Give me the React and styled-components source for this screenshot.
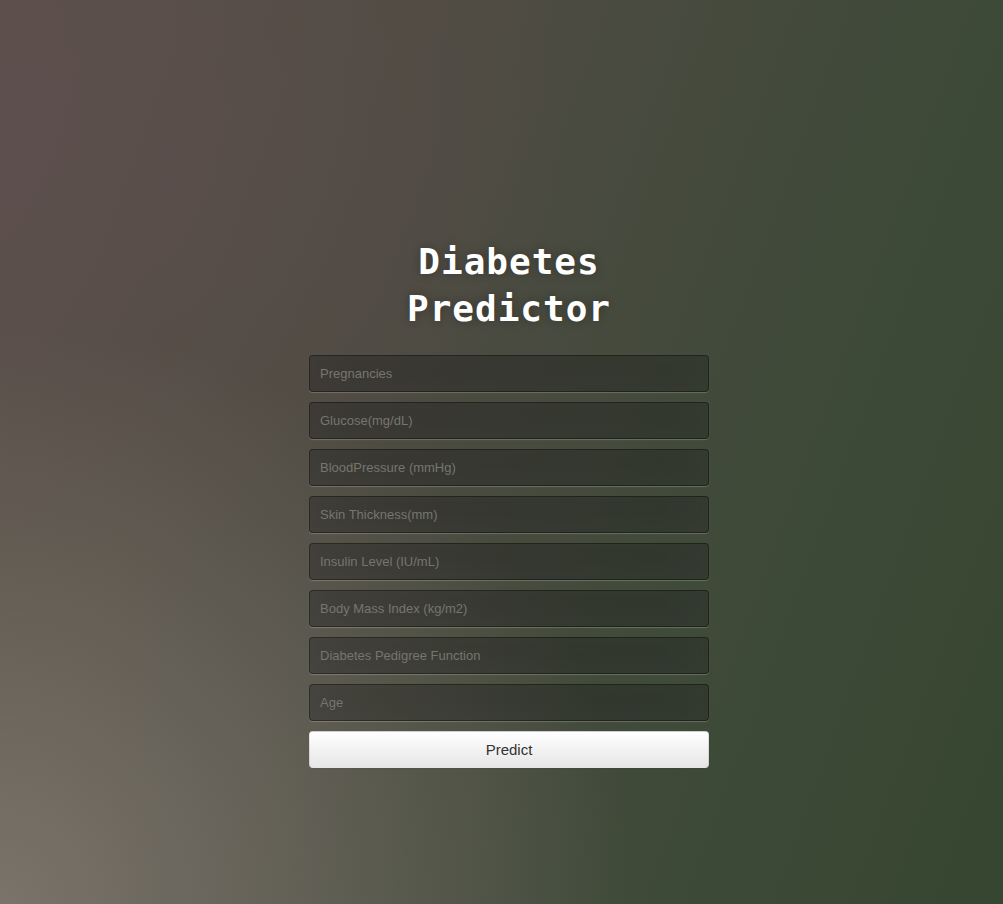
import React from "react";
import styled, { createGlobalStyle } from "styled-components";

const Global = createGlobalStyle`
  html, body { margin: 0; padding: 0; height: 100%; }
  body {
    font-family: "Liberation Sans", Arial, sans-serif;
    background-color: #4a4a40;
  }
  * { box-sizing: border-box; }
`;

const Page = styled.div`
  min-height: 904px;
  width: 100%;
  display: flex;
  justify-content: center;
  padding: 238px 0 0 15px;
  background:
    radial-gradient(ellipse at 0% 100%, rgba(128, 122, 112, 0.85) 0%, rgba(128, 122, 112, 0) 45%),
    radial-gradient(ellipse at 0% 15%, rgba(92, 78, 78, 0.8) 0%, rgba(92, 78, 78, 0) 40%),
    linear-gradient(110deg, #5c5048 0%, #4d4b42 40%, #3f4a39 70%, #364630 100%);
`;

const Login = styled.div`
  width: 400px;
  display: flex;
  flex-direction: column;
`;

const Title = styled.h1`
  margin: 0 0 23px;
  color: #fff;
  font-family: "DejaVu Sans Mono", "Liberation Mono", monospace;
  font-weight: bold;
  font-size: 36px;
  line-height: 47px;
  letter-spacing: 1px;
  text-align: center;
  text-shadow: 0 0 10px rgba(0, 0, 0, 0.3);
`;

const Form = styled.form`
  display: flex;
  flex-direction: column;
  gap: 10px;
  margin: 0;
`;

const Field = styled.input`
  width: 100%;
  height: 37px;
  padding: 10px;
  font-family: "Liberation Sans", Arial, sans-serif;
  font-size: 13px;
  color: #fff;
  background: rgba(0, 0, 0, 0.3);
  border: 1px solid rgba(0, 0, 0, 0.3);
  border-radius: 4px;
  outline: none;
  box-shadow: inset 0 -5px 45px rgba(100, 100, 100, 0.2), 0 1px 1px rgba(255, 255, 255, 0.2);
  &::placeholder { color: #76766e; }
`;

const Button = styled.button`
  width: 100%;
  height: 37px;
  padding: 9px 14px;
  font-family: "Liberation Sans", Arial, sans-serif;
  font-size: 15px;
  color: #333;
  background: linear-gradient(to bottom, #ffffff, #e6e6e6);
  border: 1px solid rgba(0, 0, 0, 0.1);
  border-radius: 4px;
  box-shadow: inset 0 1px 0 rgba(255, 255, 255, 0.2), 0 1px 2px rgba(0, 0, 0, 0.05);
  cursor: pointer;
`;

const fields = [
  "Pregnancies",
  "Glucose(mg/dL)",
  "BloodPressure (mmHg)",
  "Skin Thickness(mm)",
  "Insulin Level (IU/mL)",
  "Body Mass Index (kg/m2)",
  "Diabetes Pedigree Function",
  "Age",
];

export default function App() {
  return (
    <>
      <Global />
      <Page>
        <Login>
          <Title>Diabetes Predictor</Title>
          <Form onSubmit={(e) => e.preventDefault()}>
            {fields.map((f) => (
              <Field key={f} type="text" placeholder={f} />
            ))}
            <Button type="submit">Predict</Button>
          </Form>
        </Login>
      </Page>
    </>
  );
}
